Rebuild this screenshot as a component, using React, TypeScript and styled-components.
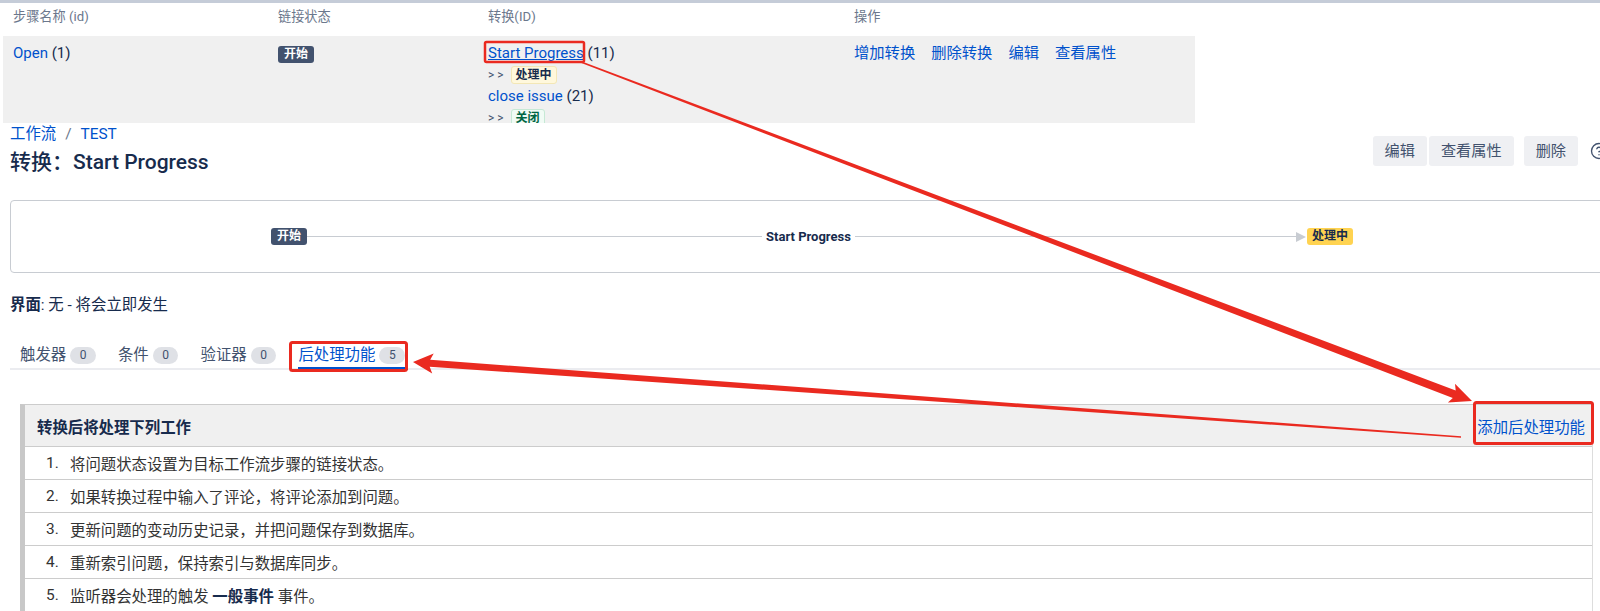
import React from 'react';
import styled, { createGlobalStyle } from 'styled-components';
import { CircleHelp } from 'lucide-react';

const GlobalStyle = createGlobalStyle`
  html, body {
    margin: 0;
    padding: 0;
    background: #ffffff;
    overflow: hidden;
  }
  body {
    font-family: Roboto, "Noto Sans CJK SC", sans-serif;
    font-size: 15.4px;
    color: #172b4d;
  }
`;

const Page = styled.div`
  position: relative;
  width: 1600px;
  height: 611px;
  overflow: hidden;
`;

const TopBar = styled.div`
  height: 3px;
  background: #c5ccd8;
`;

/* ---------- step table (pasted on top) ---------- */

const StepTable = styled.div`
  margin-left: 3px;
  width: 1192px;
`;

const StepRow = styled.div<{ $head?: boolean }>`
  display: grid;
  grid-template-columns: 265px 210px 366px 1fr;
  height: ${(p) => (p.$head ? '33px' : '87px')};
  padding-top: ${(p) => (p.$head ? '4px' : '7px')};
  box-sizing: border-box;
  background: ${(p) => (p.$head ? 'transparent' : '#f0f0f0')};
  font-size: ${(p) => (p.$head ? '13.2px' : '15px')};
  color: ${(p) => (p.$head ? '#6b778c' : '#172b4d')};
  line-height: ${(p) => (p.$head ? '20px' : '21px')};
  overflow: hidden;
`;

const Cell = styled.div`
  padding: 0 10px;
`;

const Link = styled.a<{ $underline?: boolean }>`
  color: #0052cc;
  text-decoration: ${(p) => (p.$underline ? 'underline' : 'none')};
  cursor: pointer;
`;

const Actions = styled.div`
  display: flex;
  gap: 16px;
  padding: 0 10px;
  font-size: 15.3px;
`;

const Lozenge = styled.span<{ $kind: 'start' | 'progress' | 'done' | 'progressSolid' }>`
  display: inline-block;
  height: 17px;
  line-height: 17px;
  padding: 0 5px;
  border-radius: 3px;
  font-size: 12px;
  font-weight: 700;
  vertical-align: middle;
  box-sizing: border-box;
  ${(p) =>
    p.$kind === 'start'
      ? 'background: #42526e; color: #ffffff; padding: 0 6px;'
      : p.$kind === 'progress'
      ? 'background: #fff8dc; color: #172b4d; border: 1px solid #f3e7b6; height: 18px; line-height: 16px; padding: 0 4px;'
      : p.$kind === 'done'
      ? 'background: #f1fbf5; color: #006644; border: 1px solid #c6e9d5; height: 18px; line-height: 16px; padding: 0 4px;'
      : 'background: #ffd351; color: #172b4d; padding: 0 5px;'}
`;

const Chevrons = styled.span`
  font-size: 12px;
  color: #42526e;
  letter-spacing: 3px;
  margin-right: 4px;
`;

/* ---------- main page ---------- */

const Main = styled.main`
  width: 1610px;
  padding-left: 10px;
  box-sizing: border-box;
`;

const Header = styled.div`
  display: flex;
  justify-content: space-between;
  align-items: flex-start;
  margin-top: 1px;
`;

const Breadcrumb = styled.div`
  display: flex;
  line-height: 20px;
`;

const Sep = styled.span`
  color: #6b778c;
  padding: 0 9px;
`;

const Title = styled.h1`
  margin: 4px 0 0;
  font-size: 21px;
  font-weight: 500;
  line-height: 28px;
  color: #172b4d;
`;

const Toolbar = styled.div`
  display: flex;
  align-items: center;
  margin-top: 12px;
`;

const ButtonGroup = styled.div`
  display: flex;
  gap: 2px;
  margin-right: 10px;
`;

const Button = styled.button`
  height: 30px;
  padding: 0 12px;
  border: none;
  border-radius: 3px;
  background: #eff0f3;
  color: #42526e;
  font: inherit;
  font-size: 15.2px;
  line-height: 30px;
`;

const HelpIcon = styled.span`
  display: flex;
  margin: 0 2px 0 12px;
  color: #42526e;
`;

const DiagramBox = styled.div`
  margin-top: 24px;
  height: 73px;
  border: 1px solid #c8ccd2;
  border-radius: 4px;
  box-sizing: border-box;
  display: flex;
  align-items: center;
  justify-content: center;
  padding-left: 4px;
`;

const Diagram = styled.div`
  width: 1082px;
  display: flex;
  align-items: center;
`;

const Track = styled.div`
  flex: 1;
  height: 1px;
  background: #c8ccd2;
  display: flex;
  align-items: center;
  justify-content: center;
`;

const TrackLabel = styled.span`
  background: #ffffff;
  padding: 0 4px;
  margin-left: 14px;
  font-size: 13px;
  font-weight: 700;
  line-height: 16px;
  color: #172b4d;
`;

const ArrowTip = styled.span`
  width: 0;
  height: 0;
  border-top: 5px solid transparent;
  border-bottom: 5px solid transparent;
  border-left: 10px solid #c8ccd2;
  margin-right: 1px;
`;

const ScreenLine = styled.p`
  margin: 22px 0 0;
  line-height: 20px;
  b {
    font-weight: 700;
  }
`;

const TabStrip = styled.div`
  display: flex;
  margin-top: 30px;
  border-bottom: 2px solid #ebecf0;
`;

const Tab = styled.div`
  padding: 0 11px 0 10px;
  & + & {
    padding-left: 11px;
  }
`;

const TabLabel = styled.div<{ $active?: boolean }>`
  display: flex;
  align-items: center;
  line-height: 20px;
  padding-bottom: 2px;
  padding-right: ${(p) => (p.$active ? '3px' : '0')};
  margin-bottom: -2px;
  border-bottom: 3px solid ${(p) => (p.$active ? '#0052cc' : 'transparent')};
  color: ${(p) => (p.$active ? '#0052cc' : '#42526e')};
`;

const Count = styled.span`
  margin-left: 4px;
  height: 17px;
  line-height: 17px;
  padding: 0 9.5px;
  border-radius: 9px;
  background: #dfe1e6;
  color: #42526e;
  font-size: 12px;
`;

const FunctionTable = styled.section`
  margin: 34px 0 0 10px;
  width: 1573px;
  border-left: 5px solid #c8c8c8;
  border-right: 1px solid #dddddd;
  border-top: 1px solid #cccccc;
  box-sizing: border-box;
`;

const FunctionHead = styled.div`
  height: 42px;
  box-sizing: border-box;
  display: flex;
  align-items: center;
  justify-content: space-between;
  padding: 0 7px 0 12px;
  background: #f0f0f0;
  border-bottom: 1px solid #cccccc;
`;

const HeadTitle = styled.strong`
  font-weight: 700;
  color: #172b4d;
`;

const FunctionRow = styled.div`
  height: 33px;
  box-sizing: border-box;
  display: flex;
  align-items: center;
  padding-left: 21px;
  border-bottom: 1px solid #cccccc;
  color: #333333;
`;

const Num = styled.span`
  width: 24px;
`;

const Strong = styled.b`
  color: #172b4d;
  font-weight: 700;
`;

/* ---------- annotation layer ---------- */

const Annotations = styled.svg`
  position: absolute;
  left: 0;
  top: 0;
  pointer-events: none;
`;

const RED = '#ea2a20';

const arrowPoints = (
  x1: number,
  y1: number,
  x2: number,
  y2: number,
  tail: number,
  shaft: number,
  headLen: number,
  headHalf: number,
) => {
  const dx = x2 - x1;
  const dy = y2 - y1;
  const len = Math.hypot(dx, dy);
  const ux = dx / len;
  const uy = dy / len;
  const nx = -uy;
  const ny = ux;
  const bx = x2 - ux * headLen;
  const by = y2 - uy * headLen;
  const wx = x2 - ux * (headLen + 3);
  const wy = y2 - uy * (headLen + 3);
  const pts: [number, number][] = [
    [x1 + (nx * tail) / 2, y1 + (ny * tail) / 2],
    [bx + (nx * shaft) / 2, by + (ny * shaft) / 2],
    [wx + nx * headHalf, wy + ny * headHalf],
    [x2, y2],
    [wx - nx * headHalf, wy - ny * headHalf],
    [bx - (nx * shaft) / 2, by - (ny * shaft) / 2],
    [x1 - (nx * tail) / 2, y1 - (ny * tail) / 2],
  ];
  return pts.map((p) => `${p[0].toFixed(1)},${p[1].toFixed(1)}`).join(' ');
};

const steps = [
  '将问题状态设置为目标工作流步骤的链接状态。',
  '如果转换过程中输入了评论，将评论添加到问题。',
  '更新问题的变动历史记录，并把问题保存到数据库。',
  '重新索引问题，保持索引与数据库同步。',
];

const tabs = [
  { label: '触发器', count: 0 },
  { label: '条件', count: 0 },
  { label: '验证器', count: 0 },
  { label: '后处理功能', count: 5, active: true },
];

export default function App() {
  return (
    <Page>
      <GlobalStyle />
      <TopBar />

      <StepTable>
        <StepRow $head>
          <Cell>步骤名称 (id)</Cell>
          <Cell>链接状态</Cell>
          <Cell>转换(ID)</Cell>
          <Cell>操作</Cell>
        </StepRow>
        <StepRow>
          <Cell>
            <Link>Open</Link> (1)
          </Cell>
          <Cell>
            <Lozenge $kind="start">开始</Lozenge>
          </Cell>
          <Cell>
            <div>
              <Link $underline>Start Progress</Link> (11)
            </div>
            <div>
              <Chevrons>&gt;&gt;</Chevrons>
              <Lozenge $kind="progress">处理中</Lozenge>
            </div>
            <div>
              <Link>close issue</Link> (21)
            </div>
            <div>
              <Chevrons>&gt;&gt;</Chevrons>
              <Lozenge $kind="done">关闭</Lozenge>
            </div>
          </Cell>
          <Actions>
            <Link>增加转换</Link>
            <Link>删除转换</Link>
            <Link>编辑</Link>
            <Link>查看属性</Link>
          </Actions>
        </StepRow>
      </StepTable>

      <Main>
        <Header>
          <div>
            <Breadcrumb>
              <Link>工作流</Link>
              <Sep>/</Sep>
              <Link>TEST</Link>
            </Breadcrumb>
            <Title>转换：Start Progress</Title>
          </div>
          <Toolbar>
            <ButtonGroup>
              <Button>编辑</Button>
              <Button>查看属性</Button>
            </ButtonGroup>
            <Button>删除</Button>
            <HelpIcon>
              <CircleHelp size={18} strokeWidth={1.8} />
            </HelpIcon>
          </Toolbar>
        </Header>

        <DiagramBox>
          <Diagram>
            <Lozenge $kind="start">开始</Lozenge>
            <Track>
              <TrackLabel>Start Progress</TrackLabel>
            </Track>
            <ArrowTip />
            <Lozenge $kind="progressSolid">处理中</Lozenge>
          </Diagram>
        </DiagramBox>

        <ScreenLine>
          <b>界面</b>: 无 - 将会立即发生
        </ScreenLine>

        <TabStrip>
          {tabs.map((t) => (
            <Tab key={t.label}>
              <TabLabel $active={t.active}>
                {t.label}
                <Count>{t.count}</Count>
              </TabLabel>
            </Tab>
          ))}
        </TabStrip>

        <FunctionTable>
          <FunctionHead>
            <HeadTitle>转换后将处理下列工作</HeadTitle>
            <Link>添加后处理功能</Link>
          </FunctionHead>
          {steps.map((s, i) => (
            <FunctionRow key={s}>
              <Num>{i + 1}.</Num>
              {s}
            </FunctionRow>
          ))}
          <FunctionRow>
            <Num>5.</Num>
            监听器会处理的触发&nbsp;<Strong>一般事件</Strong>&nbsp;事件。
          </FunctionRow>
        </FunctionTable>
      </Main>

      <Annotations width={1600} height={611} viewBox="0 0 1600 611">
        <rect x={485} y={42} width={99} height={20} fill="none" stroke={RED} strokeWidth={2.5} rx={1.5} />
        <rect x={290.5} y={342.5} width={116} height={28} fill="none" stroke={RED} strokeWidth={3} rx={2} />
        <rect x={1474.5} y={402.5} width={118} height={41} fill="none" stroke={RED} strokeWidth={3} rx={2} />
        <polygon points={arrowPoints(581, 62, 1472, 401, 1.6, 8, 19, 10)} fill={RED} />
        <polygon points={arrowPoints(1461, 437, 413, 362, 1.4, 7, 17, 10)} fill={RED} />
      </Annotations>
    </Page>
  );
}
